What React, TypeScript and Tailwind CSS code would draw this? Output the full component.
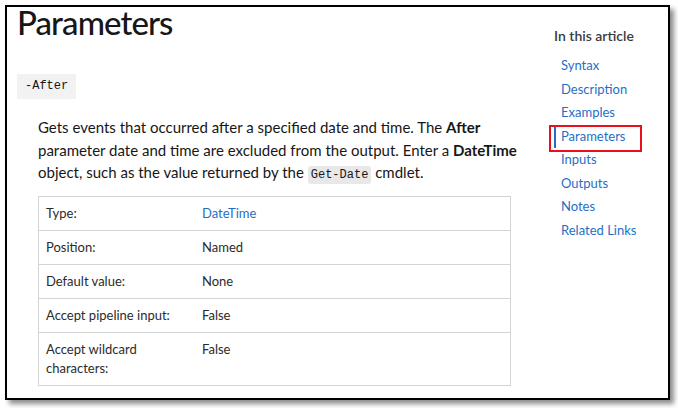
import React from "react";

type Row = { label: string; value: string; link?: boolean };

const rows: Row[] = [
  { label: "Type:", value: "DateTime", link: true },
  { label: "Position:", value: "Named" },
  { label: "Default value:", value: "None" },
  { label: "Accept pipeline input:", value: "False" },
  { label: "Accept wildcard characters:", value: "False" },
];

const navItems = [
  "Syntax",
  "Description",
  "Examples",
  "Parameters",
  "Inputs",
  "Outputs",
  "Notes",
  "Related Links",
];

const sans = "font-['Lato','Noto_Sans',sans-serif]";
const mono = "font-['Liberation_Mono','DejaVu_Sans_Mono',monospace]";

function ParamTable() {
  return (
    <div className="mt-[12px] ml-[21px] w-[473px] border border-[#d4d4d4] text-[13px] text-[#2b2b2b]">
      {rows.map((row, i) => (
        <div
          key={row.label}
          className={`flex leading-[19px] ${i > 0 ? "border-t border-[#d4d4d4]" : ""}`}
        >
          <div className="w-[163px] shrink-0 px-[7px] py-[7px]">{row.label}</div>
          <div className="flex-1 py-[7px]">
            {row.link ? <span className="text-[#1f6fc5]">{row.value}</span> : row.value}
          </div>
        </div>
      ))}
    </div>
  );
}

function Toc() {
  return (
    <nav className="pt-[19px]">
      <h3 className="text-[14px] leading-[20px] font-semibold text-[#3b3b3b]">In this article</h3>
      <ul className="mt-[8px] text-[13px] leading-[23.5px] text-[#1f6fc5]">
        {navItems.map((item) => (
          <li key={item} className="relative pl-[7px]">
            {item === "Parameters" && (
              <>
                <span className="absolute left-0 top-[2px] h-[21px] w-[2px] bg-[#1f6fc5]" />
                <span className="absolute left-[-5px] top-0 h-[27px] w-[93px] border-2 border-[#e8101a]" />
              </>
            )}
            {item}
          </li>
        ))}
      </ul>
    </nav>
  );
}

export default function App() {
  return (
    <div className={`w-[678px] h-[408px] bg-white p-[5px] ${sans}`}>
      <div className="flex h-[395px] w-[665px] border-2 border-black bg-white shadow-[4px_4px_5px_rgba(0,0,0,0.45)]">
        <div className="w-[547px] shrink-0 pl-[10px]">
          <h1 className="mt-[-1px] text-[33px] leading-[33px] font-medium tracking-[-0.9px] text-[#171717]">
            Parameters
          </h1>
          <div className="mt-[35px] leading-none">
            <code className={`inline-block h-[25px] bg-[#f2f2f2] px-[8px] text-[12px] leading-[25px] text-[#171717] ${mono}`}>
              -After
            </code>
          </div>
          <p className="mt-[17px] ml-[21px] whitespace-nowrap text-[15px] leading-[22.5px] text-[#171717]">
            Gets events that occurred after a specified date and time. The <b className="font-bold">After</b>
            <br />
            parameter date and time are excluded from the output. Enter a <b className="font-bold">DateTime</b>
            <br />
            object, such as the value returned by the{" "}
            <code className={`rounded-[3px] bg-[#e8e8e8] px-[3px] py-[2px] text-[12px] leading-none ${mono}`}>Get-Date</code> cmdlet.
          </p>
          <ParamTable />
        </div>
        <div className="flex-1">
          <Toc />
        </div>
      </div>
    </div>
  );
}
